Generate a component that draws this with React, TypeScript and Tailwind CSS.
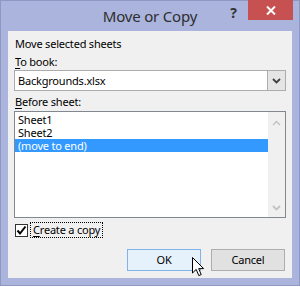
import React from "react";

const titleFont = { fontFamily: '"Noto Sans", "Segoe UI", Arial, sans-serif' };
const bodyFont = { fontFamily: '"Noto Sans", "Segoe UI", Arial, sans-serif' };

function ChevronDown({ color = "#404040" }: { color?: string }) {
  return (
    <svg width="9" height="6" viewBox="0 0 9 6">
      <path d="M1 1 L4.5 4.5 L8 1" fill="none" stroke={color} strokeWidth="1.8" />
    </svg>
  );
}

function ChevronUp({ color = "#c2c2c2" }: { color?: string }) {
  return (
    <svg width="9" height="6" viewBox="0 0 9 6">
      <path d="M1 5 L4.5 1.5 L8 5" fill="none" stroke={color} strokeWidth="1.5" />
    </svg>
  );
}

function Cursor() {
  return (
    <svg width="13" height="20" viewBox="0 0 13 20" className="absolute left-[192px] top-[257px]">
      <path
        d="M0.5 0.5 L0.5 16 L4.2 12.4 L6.8 18.6 L9.2 17.6 L6.7 11.6 L11.6 11.6 Z"
        fill="#fff"
        stroke="#000"
        strokeWidth="1"
      />
    </svg>
  );
}

export default function App() {
  const rows = ["Sheet1", "Sheet2", "(move to end)"];
  return (
    <div className="relative w-[300px] h-[287px] bg-white overflow-hidden">
      <div className="h-[286px] flex flex-col bg-[#aab4dc] border border-[#8e98c2]">
        {/* title bar */}
        <div className="h-[30px] grid grid-cols-[1fr_auto_1fr] items-start" style={titleFont}>
          <div />
          <div className="pt-[5px] text-[15px] tracking-[-0.2px] leading-[20px] text-[#2e2e2e]">Move or Copy</div>
          <div className="flex justify-end items-start">
            <span className="mt-[4px] mr-[11px] text-[14px] font-bold leading-[16px] text-[#333]">?</span>
            <div className="w-[45px] h-[20px] mr-[6px] -mt-px bg-[#c75050] flex items-center justify-center">
              <svg width="10" height="9" viewBox="0 0 10 9">
                <path d="M1 0.5 L9 8.5 M9 0.5 L1 8.5" stroke="#fff" strokeWidth="2" />
              </svg>
            </div>
          </div>
        </div>

        {/* client */}
        <div
          className="flex-1 mx-[7px] bg-[#f0f0f0] px-[6px] pt-[5px] flex flex-col text-[11px] tracking-[-0.2px] text-black"
          style={bodyFont}
        >
          <div className="h-[16px] leading-[16px] pl-px">Move selected sheets</div>
          <div className="mt-[2px] h-[16px] leading-[16px] pl-px">
            <span className="underline underline-offset-2">T</span>o book:
          </div>
          <div className="h-[21px] flex border border-[#acacac] bg-white">
            <div className="flex-1 pl-[3px] leading-[19px]">Backgrounds.xlsx</div>
            <div className="w-[18px] bg-[#e5e5e5] border-l border-[#acacac] flex items-center justify-center">
              <ChevronDown />
            </div>
          </div>
          <div className="mt-[3px] h-[16px] leading-[16px] pl-px">
            <span className="underline underline-offset-2">B</span>efore sheet:
          </div>
          <div className="mt-px h-[107px] flex border border-[#828790] bg-white">
            <div className="flex-1 pt-px flex flex-col">
              {rows.map((r, i) => (
                <div
                  key={r}
                  className={
                    "h-[13px] leading-[13px] pl-[3px] " +
                    (i === 2 ? "bg-[#3399ff] text-white" : "")
                  }
                >
                  {r}
                </div>
              ))}
            </div>
            <div className="w-[17px] bg-[#f0f0f0] flex flex-col items-center justify-between pt-[8px] pb-[6px]">
              <ChevronUp />
              <ChevronDown color="#c2c2c2" />
            </div>
          </div>

          {/* checkbox */}
          <div className="mt-[4px] h-[16px] flex items-center">
            <div className="ml-px w-[13px] h-[13px] border border-[#333] bg-white flex items-center justify-center">
              <svg width="11" height="11" viewBox="0 0 11 11">
                <path d="M1.5 5.5 L4 8.5 L9.5 1.5" fill="none" stroke="#000" strokeWidth="2" />
              </svg>
            </div>
            <div className="ml-[2px] h-[16px] px-[2px] border border-dotted border-black leading-[14px]">
              <span className="underline underline-offset-2">C</span>reate a copy
            </div>
          </div>

          {/* buttons */}
          <div className="mt-[11px] flex justify-end gap-[10px] pr-px">
            <button className="w-[74px] h-[22px] bg-[#e5f1fb] border border-[#7eb4ea] text-[11px] leading-[20px]">
              OK
            </button>
            <button className="w-[74px] h-[22px] bg-[#e1e1e1] border border-[#adadad] text-[11px] leading-[20px]">
              Cancel
            </button>
          </div>
        </div>
        <div className="h-[7px]" />
      </div>
      <Cursor />
    </div>
  );
}
